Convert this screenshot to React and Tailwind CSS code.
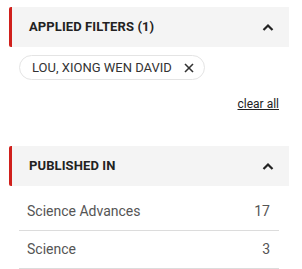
import React from 'react';

// --- Iconos ---
const ChevronUp = () => (
  <svg width="12" height="8" viewBox="0 0 12 8" fill="none" stroke="#222" strokeWidth="2.2" strokeLinecap="butt">
    <polyline points="1.5,7 6,2.5 10.5,7" />
  </svg>
);

const CloseIcon = () => (
  <svg width="10" height="10" viewBox="0 0 10 10" fill="none" stroke="#333" strokeWidth="1.6">
    <line x1="1" y1="1" x2="9" y2="9" />
    <line x1="9" y1="1" x2="1" y2="9" />
  </svg>
);

const SectionHeader = ({ title }) => (
  <div className="flex items-center justify-between h-[40px] bg-[#f4f4f4] border-l-[3px] border-[#d0201c] rounded-l-[2px] pl-[17px] pr-[15px]">
    <span className="text-[13px] font-bold tracking-[0.1px] text-[#222]">{title}</span>
    <ChevronUp />
  </div>
);

const journals = [
  { name: 'Science Advances', count: 17 },
  { name: 'Science', count: 3 },
];

export default function App() {
  return (
    <div className="w-[302px] h-[269px] bg-white pt-[7px] pl-[9px] pr-[13px] font-['Roboto',sans-serif] overflow-hidden">
      <SectionHeader title="APPLIED FILTERS (1)" />

      <div className="mt-[8px] ml-[10px] flex">
        <div className="flex items-center h-[25px] rounded-full border border-[#e4e4e4] pl-[12px] pr-[10px] gap-[12px]">
          <span className="text-[13px] text-[#333]">LOU, XIONG WEN DAVID</span>
          <CloseIcon />
        </div>
      </div>

      <div className="flex justify-end mr-[10px] mt-[16px]">
        <a className="text-[12px] leading-[16px] text-[#222] underline">clear all</a>
      </div>

      <div className="mt-[34px]">
        <SectionHeader title="PUBLISHED IN" />
      </div>

      <ul className="mx-[10px] mt-[7px]">
        {journals.map(j => (
          <li key={j.name} className="flex items-center justify-between h-[38px] border-b border-[#dcdcdc] pl-[8px] pr-[9px] text-[14px] text-[#555]">
            <span>{j.name}</span>
            <span>{j.count}</span>
          </li>
        ))}
      </ul>
    </div>
  );
}
